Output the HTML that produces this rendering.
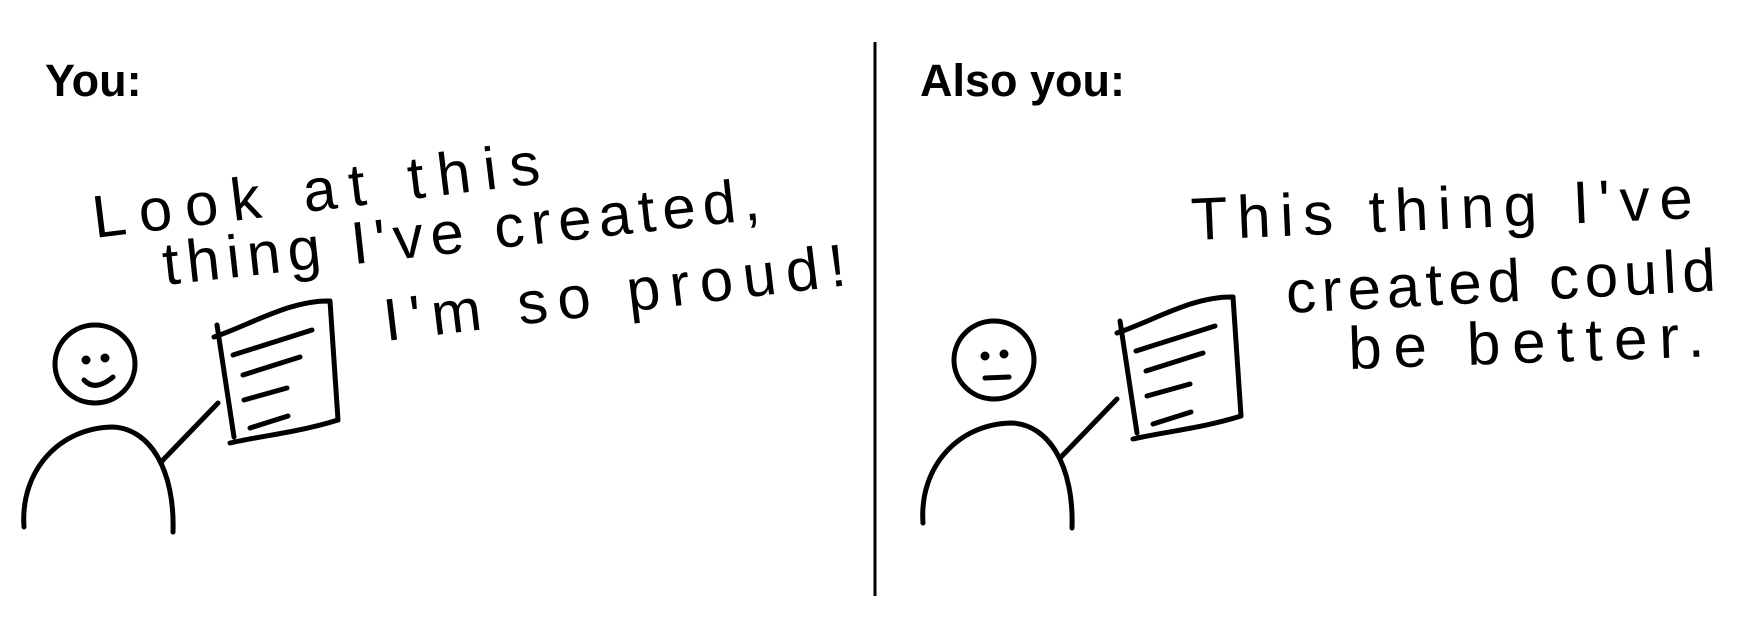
<!DOCTYPE html>
<html><head><style>
html,body{margin:0;padding:0;background:#fff;width:1744px;height:636px;overflow:hidden}
svg{display:block}
.h{font-family:"Liberation Sans",sans-serif;font-weight:bold;font-size:45px;fill:#000}
.w{font-family:"Liberation Sans",sans-serif;font-size:60px;fill:#000}
</style></head><body>
<svg width="1744" height="636" viewBox="0 0 1744 636" xmlns="http://www.w3.org/2000/svg">
<text class="h" x="45" y="96">You:</text>
<text class="h" x="920" y="96">Also you:</text>
<line x1="875" y1="42" x2="875" y2="596" stroke="#000" stroke-width="3"/>

<g fill="none" stroke="#000" stroke-width="5" stroke-linecap="round" stroke-linejoin="round">
 <ellipse cx="95" cy="364" rx="40" ry="39"/>
 <path d="M24 527 C20 470 60 428 112 427 C150 428 175 470 173 532"/>
 <path d="M162 461 L218 403"/>
 <path d="M217 325 L234 437 M214 337 C250 325 290 300 330 301 L338 420 C300 432 260 436 230 443"/>
 <path d="M233 355 L312 330 M243 375 L300 357 M244 400 L287 388 M250 428 L288 416"/>
 <circle cx="86" cy="360" r="2" fill="#000"/><circle cx="105" cy="358" r="2" fill="#000"/>
 <path d="M84 380 Q95 392 113 377"/>
 <g transform="translate(899,-4)">
  <ellipse cx="95" cy="364" rx="40" ry="39"/>
  <path d="M24 527 C20 470 60 428 112 427 C150 428 175 470 173 532"/>
  <path d="M162 461 L218 403"/>
  <circle cx="86" cy="360" r="2" fill="#000"/><circle cx="105" cy="358" r="2" fill="#000"/>
  <path d="M86 382 L110 381"/>
 </g>
 <g transform="translate(903,-4)">
  <path d="M217 325 L234 437 M214 337 C250 325 290 300 330 301 L338 420 C300 432 260 436 230 443"/>
  <path d="M233 355 L312 330 M243 375 L300 357 M244 400 L287 388 M250 428 L288 416"/>
 </g>
</g>

<text class="w" transform="translate(95,238) rotate(-7)" textLength="450">Look at this</text>
<text class="w" transform="translate(165,285) rotate(-6.3)" textLength="600">thing I've created,</text>
<text class="w" transform="translate(386,341) rotate(-6.9)" textLength="465">I'm so proud!</text>

<text class="w" transform="translate(1192,240) rotate(-2.5)" textLength="502">This thing I've</text>
<text class="w" transform="translate(1287,313) rotate(-3)" textLength="430">created could</text>
<text class="w" transform="translate(1349,369) rotate(-2)" textLength="356">be better.</text>
</svg>
</body></html>
